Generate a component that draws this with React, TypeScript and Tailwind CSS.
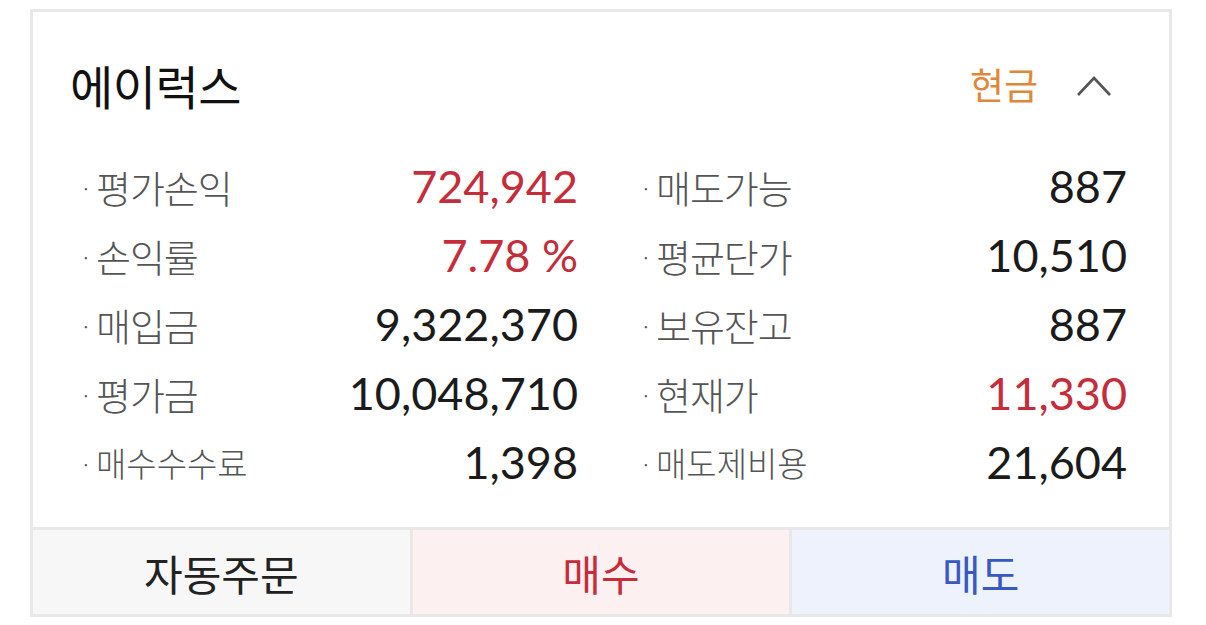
import React from "react";

const KR = "font-['Noto_Sans_CJK_KR','Noto_Sans',sans-serif]";
const NUM = "font-['Lato','Noto_Sans_CJK_KR',sans-serif]";

type Row = { label: string; value: string; red?: boolean; small?: boolean };

const left: Row[] = [
  { label: "평가손익", value: "724,942", red: true },
  { label: "손익률", value: "7.78 %", red: true },
  { label: "매입금", value: "9,322,370" },
  { label: "평가금", value: "10,048,710" },
  { label: "매수수수료", value: "1,398", small: true },
];

const right: Row[] = [
  { label: "매도가능", value: "887" },
  { label: "평균단가", value: "10,510" },
  { label: "보유잔고", value: "887" },
  { label: "현재가", value: "11,330", red: true },
  { label: "매도제비용", value: "21,604", small: true },
];

function Item({ r }: { r: Row }) {
  return (
    <div className="flex h-[69px] items-center justify-between">
      <div className={`flex items-center ${KR} font-light text-[#555]`}>
        <span className="mr-[4px] text-[22px] leading-none">·</span>
        {r.small ? (
          <span className="inline-block origin-left scale-x-[0.97] text-[34px] leading-none">
            {r.label}
          </span>
        ) : (
          <span className="text-[38px] leading-none tracking-[-1px]">{r.label}</span>
        )}
      </div>
      <div
        className={`${NUM} text-[45px] leading-none ${
          r.red ? "text-[#c52d3b]" : "text-[#1b1b1b]"
        }`}
      >
        {r.value}
      </div>
    </div>
  );
}

export default function App() {
  return (
    <div className="min-h-[625px] w-[1206px] bg-white pt-[9px] pl-[30px]">
      <div className="flex w-[1142px] flex-col border-[3px] border-[#e8e8e8] bg-white">
        <div className="flex h-[140px] items-center justify-between pt-[4px] pl-[37px] pr-[57px]">
          <div className={`${KR} text-[47px] leading-none tracking-[-0.5px] text-[#111]`}>
            에이럭스
          </div>
          <div className="flex items-center gap-[38px]">
            <span className={`${KR} text-[37px] leading-none text-[#e0883a]`}>현금</span>
            <svg width="36" height="22" viewBox="0 0 36 22" className="mt-[4px]">
              <polyline
                points="2,20 18,3 34,20"
                fill="none"
                stroke="#555"
                strokeWidth="2.6"
              />
            </svg>
          </div>
        </div>
        <div className="grid grid-cols-[498px_487px] gap-x-[62px] pl-[47px] pr-[42px] pb-[30px]">
          <div className="flex flex-col">
            {left.map((r) => (
              <Item key={r.label} r={r} />
            ))}
          </div>
          <div className="flex flex-col">
            {right.map((r) => (
              <Item key={r.label} r={r} />
            ))}
          </div>
        </div>
        <div className="flex h-[87px] border-t-[3px] border-[#e8e8e8]">
          <div
            className={`flex flex-1 items-center justify-center bg-[#f7f7f7] ${KR} text-[42px] text-[#222]`}
          >
            자동주문
          </div>
          <div
            className={`flex flex-1 items-center justify-center border-l-[3px] border-[#e8e8e8] bg-[#fcf0f0] ${KR} text-[42px] text-[#c52d3b]`}
          >
            매수
          </div>
          <div
            className={`flex flex-1 items-center justify-center border-l-[3px] border-[#e8e8e8] bg-[#eef2fc] ${KR} text-[42px] text-[#3858c2]`}
          >
            매도
          </div>
        </div>
      </div>
    </div>
  );
}
